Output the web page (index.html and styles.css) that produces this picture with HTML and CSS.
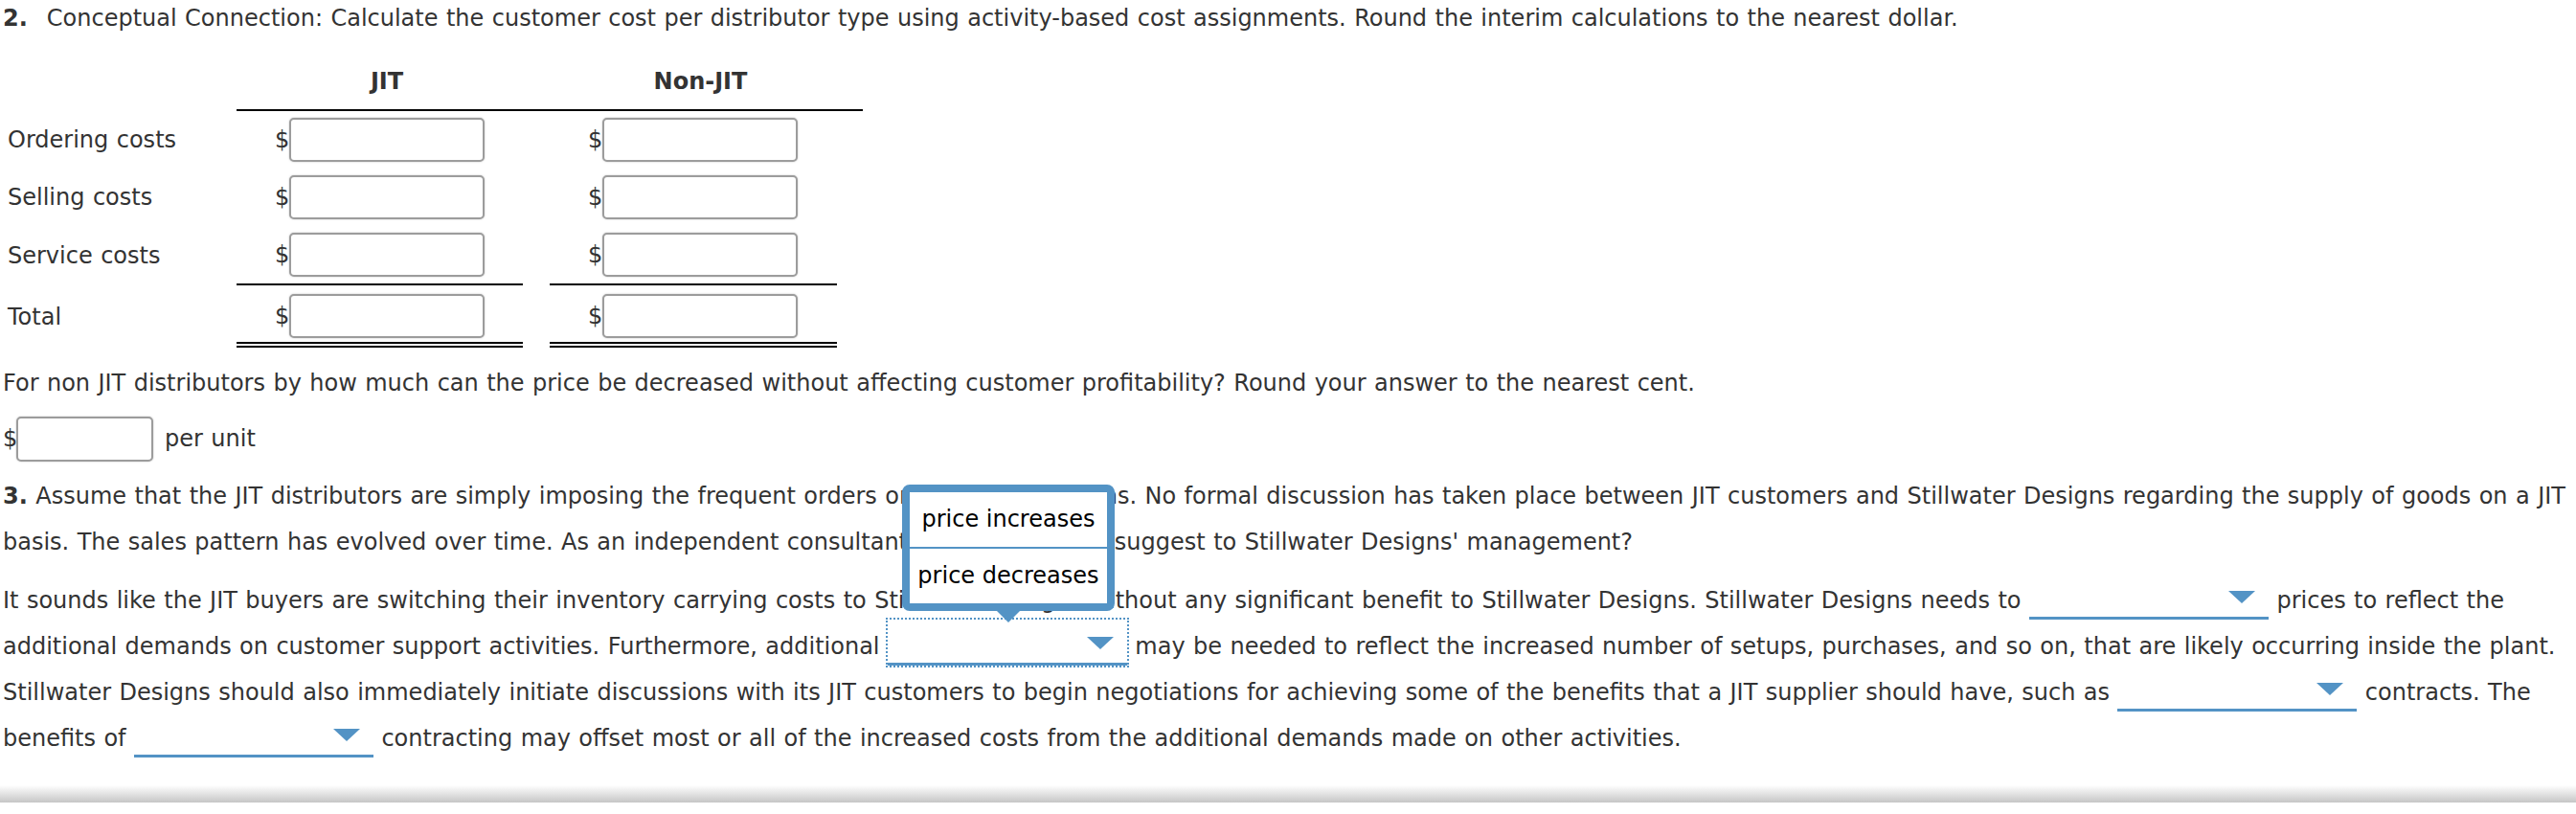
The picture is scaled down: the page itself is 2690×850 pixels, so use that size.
FILE: index.html
```html
<!DOCTYPE html>
<html>
<head>
<meta charset="utf-8">
<link rel="stylesheet" href="styles.css">
</head>
<body>
<div class="page">
  <p class="q1"><b class="num2">2.</b>Conceptual Connection: Calculate the customer cost per distributor type using activity-based cost assignments. Round the interim calculations to the nearest dollar.</p>

  <div class="cost-table">
    <div class="row hdr">
      <div class="lbl"></div>
      <div class="hcell">JIT</div>
      <div class="hgap"></div>
      <div class="hcell">Non-JIT</div>
      <div class="hgap"></div>
    </div>
    <div class="row">
      <div class="lbl">Ordering costs</div>
      <div class="cell"><span class="dol">$</span><span class="inp"></span></div>
      <div></div>
      <div class="cell"><span class="dol">$</span><span class="inp"></span></div>
    </div>
    <div class="row">
      <div class="lbl">Selling costs</div>
      <div class="cell"><span class="dol">$</span><span class="inp"></span></div>
      <div></div>
      <div class="cell"><span class="dol">$</span><span class="inp"></span></div>
    </div>
    <div class="row sub">
      <div class="lbl">Service costs</div>
      <div class="cell"><span class="dol">$</span><span class="inp"></span></div>
      <div></div>
      <div class="cell"><span class="dol">$</span><span class="inp"></span></div>
    </div>
    <div class="row total">
      <div class="lbl">Total</div>
      <div class="cell"><span class="dol">$</span><span class="inp"></span></div>
      <div></div>
      <div class="cell"><span class="dol">$</span><span class="inp"></span></div>
    </div>
  </div>

  <p class="para">For non JIT distributors by how much can the price be decreased without affecting customer profitability? Round your answer to the nearest cent.</p>
  <div class="unit-row"><span class="dol">$</span><span class="inp small"></span><span class="unit">per unit</span></div>

  <p class="para p3"><b>3.</b> Assume that the JIT distributors are simply imposing the frequent orders on Stillwater Designs. No formal discussion has taken place between JIT customers and Stillwater Designs regarding the supply of goods on a JIT<br>basis. The sales pattern has evolved over time. As an independent consultant, what would you suggest to Stillwater Designs' management?</p>

  <p class="para p4">It sounds like the JIT buyers are switching their inventory carrying costs to Stillwater Designs without any significant benefit to Stillwater Designs. Stillwater Designs needs to <span class="dd"><span class="tri"></span></span> prices to reflect the<br>additional demands on customer support activities. Furthermore, additional <span class="dd focus"><span class="tri"></span><span class="menu"><span class="opt">price increases</span><span class="opt">price decreases</span></span></span> may be needed to reflect the increased number of setups, purchases, and so on, that are likely occurring inside the plant.<br>Stillwater Designs should also immediately initiate discussions with its JIT customers to begin negotiations for achieving some of the benefits that a JIT supplier should have, such as <span class="dd"><span class="tri"></span></span> contracts. The<br>benefits of <span class="dd"><span class="tri"></span></span> contracting may offset most or all of the increased costs from the additional demands made on other activities.</p>

  <div class="footer-shade"></div>
</div>
</body>
</html>
```

FILE: styles.css
```css
html, body {
  margin: 0;
  padding: 0;
  background: #fff;
}
body {
  font-family: "DejaVu Sans", Verdana, sans-serif;
  font-size: 24px;
  word-spacing: 0.8px;
  color: #333;
}
.page {
  width: 2690px;
  height: 850px;
  overflow: hidden;
}
.q1 {
  margin: 0;
  padding-left: 3px;
  line-height: 38px;
  white-space: nowrap;
}
.num2 {
  margin-right: 20px;
}
b {
  font-weight: bold;
}

/* cost table */
.cost-table {
  display: flex;
  flex-direction: column;
}
.row {
  display: grid;
  grid-template-columns: 247px 299px 28px 300px 27px;
  align-items: center;
}
.row > div {
  height: 100%;
  box-sizing: border-box;
}
.hdr .hcell {
  padding: 32px 40px 14px 55px;
  line-height: 30px;
  text-align: center;
  font-weight: bold;
  border-bottom: 2px solid #000;
  color: #333;
}
.hdr .hgap {
  border-bottom: 2px solid #000;
}
.lbl {
  display: flex;
  align-items: center;
  padding-left: 8px;
  white-space: nowrap;
}
.cell {
  display: flex;
  align-items: center;
  padding: 7px 0 7px 40px;
}
.sub .cell {
  border-bottom: 2px solid #000;
}
.total .cell {
  padding: 9px 0 4px 40px;
  border-bottom: 6px double #000;
}
.dol {
  display: inline-block;
  width: 15px;
  text-align: left;
}
.inp {
  display: inline-block;
  box-sizing: border-box;
  width: 204px;
  height: 46px;
  border: 2px solid #9c9c9c;
  border-radius: 5px;
  background: #fff;
  box-shadow: 0 0 2px rgba(0,0,0,0.25);
}

.para {
  margin: 13px 0 0 0;
  padding-left: 3px;
  line-height: 48px;
  white-space: nowrap;
}
.unit-row {
  display: flex;
  align-items: center;
  height: 48px;
  margin-top: 10px;
  padding-left: 3px;
}
.unit-row .dol {
  width: 14px;
}
.inp.small {
  width: 143px;
  height: 47px;
}
.unit {
  margin-left: 12px;
}
.p3 {
  margin-top: 12px;
}
.p4 {
  margin-top: 13px;
}

/* dropdowns */
.dd {
  display: inline-flex;
  justify-content: flex-end;
  align-items: center;
  box-sizing: border-box;
  width: 250px;
  height: 44px;
  padding-right: 14px;
  vertical-align: top;
  border-bottom: 3px solid #5393c5;
  position: relative;
}
.tri {
  display: block;
  width: 0;
  height: 0;
  border-left: 14px solid transparent;
  border-right: 14px solid transparent;
  border-top: 13px solid #5393c5;
}
.dd.focus::after {
  content: "";
  position: absolute;
  left: -2px;
  right: -2px;
  top: -6px;
  bottom: -5px;
  border: 2px dotted #5393c5;
}
.menu {
  position: absolute;
  left: 15px;
  top: -145px;
  width: 222px;
  box-sizing: border-box;
  border: 8px solid #5393c5;
  border-radius: 8px;
  background: #fff;
  display: flex;
  flex-direction: column;
  z-index: 5;
  line-height: 57px;
  color: #000;
  text-align: center;
  word-spacing: 0;
}
.menu::after {
  content: "";
  position: absolute;
  left: 50%;
  margin-left: -12px;
  bottom: -20px;
  border-left: 12px solid transparent;
  border-right: 12px solid transparent;
  border-top: 12px solid #5393c5;
}
.opt {
  display: block;
  height: 57px;
}
.opt + .opt {
  border-top: 2px solid #5393c5;
}

.footer-shade {
  margin-top: 25px;
  height: 18px;
  background: linear-gradient(#fff, #c6c6c6);
}
```
